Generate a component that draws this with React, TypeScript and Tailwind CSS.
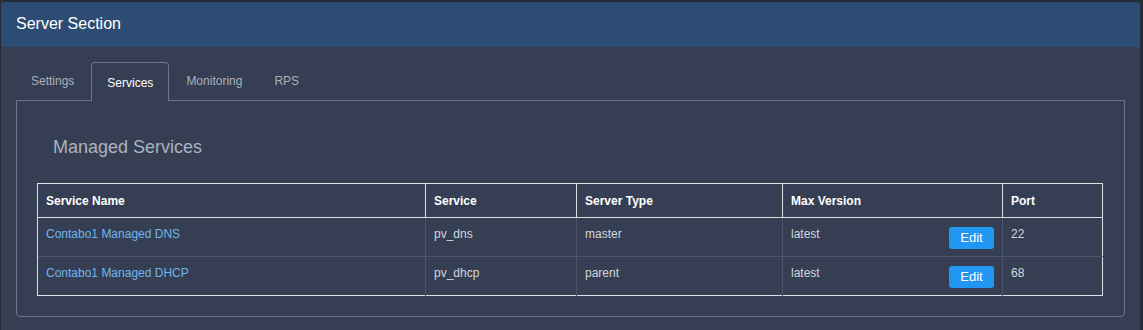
const services = [
  { name: "Contabo1 Managed DNS", service: "pv_dns", type: "master", version: "latest", port: "22" },
  { name: "Contabo1 Managed DHCP", service: "pv_dhcp", type: "parent", version: "latest", port: "68" },
];

const tabs = ["Settings", "Services", "Monitoring", "RPS"];

export default function App() {
  return (
    <div
      className="w-[1143px] h-[330px] bg-[#272c39] pt-[2px] pl-[1px] overflow-hidden"
      style={{ fontFamily: '"Liberation Sans", Arial, sans-serif' }}
    >
      <div className="w-[1139px] h-[328px] bg-[#353e52] rounded-tl-[3px] rounded-tr-[3px] overflow-hidden">
        <div className="h-[45px] bg-[#2d4c73] flex items-center pl-[15px] pb-[2px]">
          <h1 className="text-[16px] text-white">Server Section</h1>
        </div>

        <div className="px-[15px] pt-[15px]">
          <div className="flex h-[38px] items-end">
            {tabs.map((t) =>
              t === "Services" ? (
                <div
                  key={t}
                  className="h-[39px] -mb-px relative z-10 bg-[#353e52] border border-b-0 border-[#6c7691] rounded-t-[4px] px-[15px] flex items-center text-[12px] text-white"
                >
                  <span className="mt-[1px]">{t}</span>
                </div>
              ) : (
                <div
                  key={t}
                  className={
                    "h-[38px] flex items-center text-[12px] text-[#a9b0be] " +
                    (t === "Settings" ? "pl-[15px] pr-[17px]" : t === "Monitoring" ? "pl-[17px] pr-[16px]" : "pl-[16px]")
                  }
                >
                  {t}
                </div>
              )
            )}
          </div>

          <div className="w-[1109px] h-[217px] border border-[#6c7691] rounded-b-[4px] pt-[34px] px-[20px]">
            <h2 className="text-[18px] text-[#aab2c0] pl-[16px] leading-[24px]">Managed Services</h2>

            <table className="mt-[24px] w-[1066px] border border-[#dcdfe4] border-collapse text-[12px]">
              <thead>
                <tr className="h-[34px] text-white font-bold text-left">
                  <th className="w-[388px] border border-[#dcdfe4] px-[8px]">Service Name</th>
                  <th className="w-[151px] border border-[#dcdfe4] px-[8px]">Service</th>
                  <th className="w-[206px] border border-[#dcdfe4] px-[8px]">Server Type</th>
                  <th className="w-[220px] border border-[#dcdfe4] px-[8px]">Max Version</th>
                  <th className="border border-[#dcdfe4] px-[8px]">Port</th>
                </tr>
              </thead>
              <tbody className="text-[#d3d7de]">
                {services.map((s) => (
                  <tr key={s.name} className="border-t border-[#4b5468] align-top">
                    <td className="px-[8px] pt-[8px] leading-[17px] border-l border-[#dcdfe4] text-[#71b5ec]">{s.name}</td>
                    <td className="px-[8px] pt-[8px] leading-[17px] border-l border-[#4b5468]">{s.service}</td>
                    <td className="px-[8px] pt-[8px] leading-[17px] border-l border-[#4b5468]">{s.type}</td>
                    <td className="px-[8px] pt-[8px] leading-[17px] border-l border-[#4b5468]">
                      <div className="flex justify-between">
                        <span>{s.version}</span>
                        <button className="mt-[1px] mb-[7px] h-[22px] w-[45px] bg-[#2196f3] rounded-[3px] text-white text-[13px] leading-[22px]">
                          Edit
                        </button>
                      </div>
                    </td>
                    <td className="px-[8px] pt-[8px] leading-[17px] border-l border-[#4b5468]">{s.port}</td>
                  </tr>
                ))}
              </tbody>
            </table>
          </div>
        </div>
      </div>
    </div>
  );
}
